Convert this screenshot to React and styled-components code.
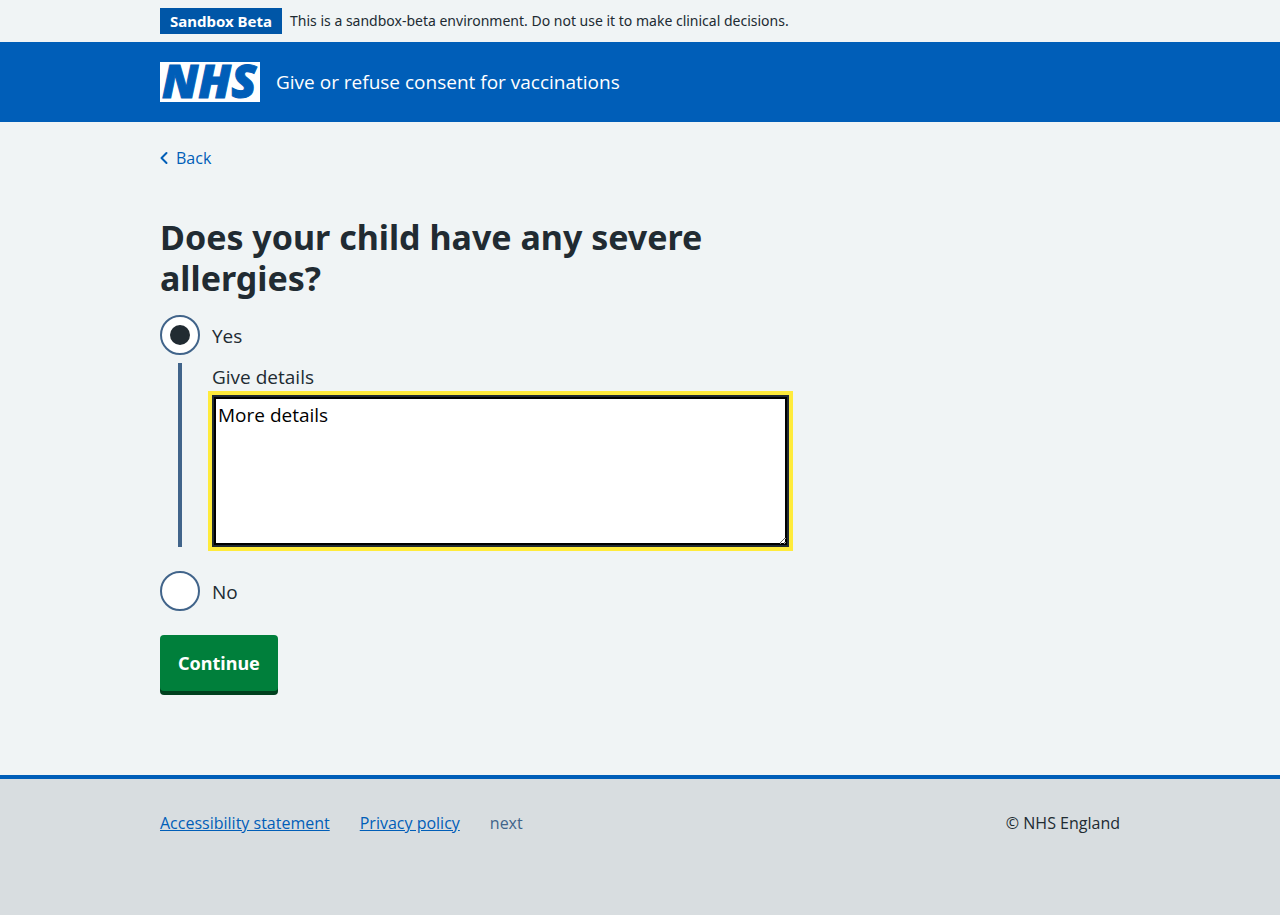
import React, { useState } from "react";
import styled, { createGlobalStyle } from "styled-components";

const GlobalStyle = createGlobalStyle`
  *, *::before, *::after { box-sizing: border-box; }
  body {
    margin: 0;
    background: #f0f4f5;
    color: #212b32;
    font-family: "Open Sans", "Noto Sans", sans-serif;
    font-size: 19px;
    font-weight: 450;
    line-height: 28px;
  }
`;

const Page = styled.div`
  display: flex;
  flex-direction: column;
  min-height: 100vh;
`;

const Container = styled.div`
  width: 100%;
  max-width: 1024px;
  margin: 0 auto;
  padding: 0 32px;
`;

const BannerRow = styled(Container)`
  display: flex;
  align-items: center;
  gap: 8px;
  padding-top: 8px;
  padding-bottom: 8px;
`;

const Tag = styled.strong`
  padding: 0 10px;
  background: #0056a7;
  color: #fff;
  font-family: "Noto Sans", "Open Sans", sans-serif;
  font-size: 15px;
  font-weight: 700;
  line-height: 26px;
  white-space: nowrap;
`;

const BannerText = styled.span`
  font-family: "Noto Sans", "Open Sans", sans-serif;
  font-size: 14px;
  font-weight: 400;
  line-height: 26px;
`;

const Header = styled.header`
  background: #005eb8;
  color: #fff;
`;

const HeaderRow = styled(Container)`
  display: flex;
  align-items: center;
  gap: 16px;
  padding-top: 20px;
  padding-bottom: 20px;
`;

const Logo = styled.svg`
  display: block;
  flex: none;
  width: 100px;
  height: 40px;
  overflow: visible;
`;

const LogoText = styled.text`
  fill: #005eb8;
  stroke: #005eb8;
  stroke-width: 1px;
  font-family: "Open Sans", "Noto Sans", sans-serif;
  font-size: 46px;
  font-style: italic;
  font-weight: 800;
`;

const BackLink = styled.a`
  display: flex;
  align-items: center;
  gap: 8px;
  width: fit-content;
  margin-top: 24px;
  color: #005eb8;
  font-size: 16px;
  font-weight: 400;
  line-height: 24px;
  text-decoration: none;
`;

const Main = styled.main`
  padding: 47px 0 80px;
`;

const Column = styled.form`
  width: 66%;
  max-width: 629px;
  @media (max-width: 700px) { width: 100%; }
`;

const Fieldset = styled.fieldset`
  margin: 0 0 24px;
  padding: 0;
  border: 0;
  min-width: 0;
`;

const Legend = styled.legend`
  padding: 0;
  margin-bottom: 16px;
`;

const Heading = styled.h1`
  margin: 0;
  font-family: "Noto Sans", "Open Sans", sans-serif;
  font-size: 34px;
  font-weight: 700;
  line-height: 41px;
`;

const RadioRow = styled.div`
  display: flex;
  align-items: center;
  gap: 12px;
`;

const Radio = styled.input`
  appearance: none;
  display: grid;
  place-items: center;
  flex: none;
  width: 40px;
  height: 40px;
  margin: 0;
  border: 2px solid #41648a;
  border-radius: 50%;
  background: #fff;

  &:checked::before {
    content: "";
    width: 20px;
    height: 20px;
    border-radius: 50%;
    background: #212b32;
  }
`;

const RadioLabel = styled.label`
  padding-top: 2px;
`;

const Conditional = styled.div`
  margin: 8px 0 24px 18px;
  padding-left: 30px;
  border-left: 4px solid #41648a;
`;

const DetailsLabel = styled.label`
  display: block;
  margin-bottom: 4px;
`;

const Details = styled.textarea`
  display: block;
  width: 100%;
  height: 152px;
  padding: 4px;
  border: 2px solid #212b32;
  border-radius: 0;
  outline: 4px solid #ffeb3b;
  box-shadow: inset 0 0 0 2px #000;
  background: #fff;
  color: #000;
  font: inherit;
  resize: vertical;
`;

const Button = styled.button`
  display: block;
  margin: 0 0 4px;
  padding: 14px 18px;
  border: 0;
  border-radius: 4px;
  background: #007f3b;
  box-shadow: 0 4px 0 #00401e;
  color: #fff;
  font: inherit;
  font-family: "Noto Sans", "Open Sans", sans-serif;
  font-size: 18px;
  font-weight: 700;
`;

const Footer = styled.footer`
  flex: 1;
  padding: 32px 0;
  border-top: 4px solid #005eb8;
  background: #d8dde0;
  font-size: 16px;
  font-weight: 400;
  line-height: 24px;
`;

const FooterRow = styled(Container)`
  display: flex;
  flex-wrap: wrap;
  justify-content: space-between;
  gap: 16px;
`;

const FooterList = styled.ul`
  display: flex;
  flex-wrap: wrap;
  gap: 30px;
  margin: 0;
  padding: 0;
  list-style: none;
`;

const FooterLink = styled.a`
  color: #005eb8;
`;

const Muted = styled.span`
  color: #41648a;
`;

export default function App() {
  const [answer, setAnswer] = useState("yes");
  const [details, setDetails] = useState("More details");

  return (
    <Page>
      <GlobalStyle />
      <BannerRow>
        <Tag>Sandbox Beta</Tag>
        <BannerText>
          This is a sandbox-beta environment. Do not use it to make clinical decisions.
        </BannerText>
      </BannerRow>
      <Header>
        <HeaderRow>
          <Logo viewBox="0 0 100 40" role="img" aria-label="NHS">
            <rect width="100" height="40" fill="#fff" />
            <LogoText x="2" y="36">NHS</LogoText>
          </Logo>
          <span>Give or refuse consent for vaccinations</span>
        </HeaderRow>
      </Header>
      <Container>
        <BackLink href="#">
          <svg width="8" height="14" viewBox="0 0 8 14" fill="none" aria-hidden="true">
            <path d="M6.5 2 1.5 7l5 5" stroke="#005eb8" strokeWidth="2" strokeLinecap="round" strokeLinejoin="round" />
          </svg>
          Back
        </BackLink>
        <Main>
          <Column onSubmit={(e) => e.preventDefault()}>
            <Fieldset>
              <Legend>
                <Heading>Does your child have any severe allergies?</Heading>
              </Legend>
              <RadioRow>
                <Radio type="radio" id="yes" name="allergies" checked={answer === "yes"} onChange={() => setAnswer("yes")} />
                <RadioLabel htmlFor="yes">Yes</RadioLabel>
              </RadioRow>
              {answer === "yes" && (
                <Conditional>
                  <DetailsLabel htmlFor="details">Give details</DetailsLabel>
                  <Details id="details" value={details} onChange={(e) => setDetails(e.target.value)} />
                </Conditional>
              )}
              <RadioRow>
                <Radio type="radio" id="no" name="allergies" checked={answer === "no"} onChange={() => setAnswer("no")} />
                <RadioLabel htmlFor="no">No</RadioLabel>
              </RadioRow>
            </Fieldset>
            <Button type="submit">Continue</Button>
          </Column>
        </Main>
      </Container>
      <Footer>
        <FooterRow>
          <FooterList>
            <li><FooterLink href="#">Accessibility statement</FooterLink></li>
            <li><FooterLink href="#">Privacy policy</FooterLink></li>
            <li><Muted>next</Muted></li>
          </FooterList>
          <span>© NHS England</span>
        </FooterRow>
      </Footer>
    </Page>
  );
}
